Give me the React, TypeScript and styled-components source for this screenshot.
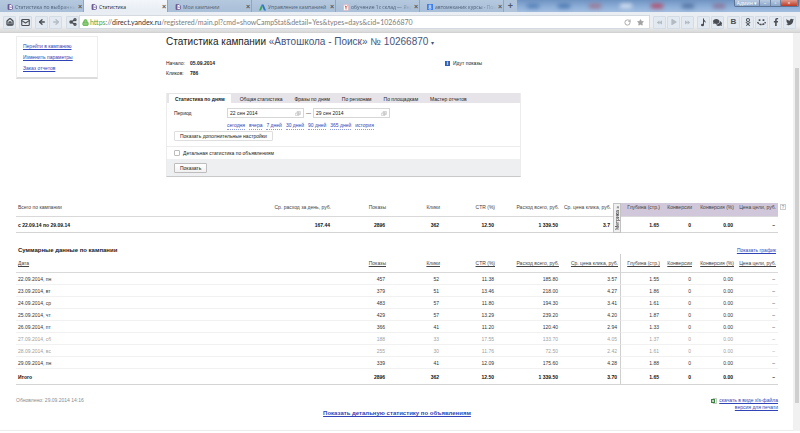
import React from "react";
import styled, { createGlobalStyle, css } from "styled-components";
import { ArrowLeft, ArrowRight, House, Mail, RotateCw, Share2, Star, Lock } from "lucide-react";
import { FaBackward, FaForward, FaPlay, FaComments, FaOdnoklassniki, FaFacebookF, FaTwitter } from "react-icons/fa";

const Global = createGlobalStyle`
  * { box-sizing: border-box; }
  html, body, #root { margin: 0; min-height: 100%; }
  body {
    background: #fff;
    color: #222;
    font: 5px/8px "Liberation Sans", Arial, sans-serif;
  }
  button, input { font: inherit; color: inherit; margin: 0; }
  svg { display: block; flex: none; }
`;

/* ---------- browser window ---------- */

const TabStrip = styled.header`
  display: flex;
  height: 12px;
  background: linear-gradient(#6f93c2, #8fb0d8 60%, #a3bde0);
  font-family: "Open Sans", sans-serif;
`;

const BrowserTab = styled.div<{ $active?: boolean }>`
  display: flex;
  align-items: center;
  flex: 0 1 84px;
  min-width: 0;
  gap: 2px;
  padding: 2px 1px 0 7px;
  border-right: 1px solid #8fa6c2;
  background: ${(p) => (p.$active ? "linear-gradient(#f3f6fa, #e6ecf3)" : "linear-gradient(#b4c8de, #a9bfd8)")};
  color: ${(p) => (p.$active ? "#222" : "#4c5f77")};
`;

const TabTitle = styled.span<{ $fade?: boolean }>`
  flex: 1;
  min-width: 0;
  overflow: hidden;
  white-space: nowrap;
  ${(p) => p.$fade && css`mask-image: linear-gradient(90deg, #000 75%, transparent);`}
`;

const TabButton = styled.button`
  display: flex;
  align-items: center;
  justify-content: center;
  padding: 0;
  border: 0;
  background: none;
  color: #4c5968;
  font: bold 7px/8px "Liberation Sans", sans-serif;
`;

const NewTab = styled(TabButton)`
  width: 13px;
  background: #b0c4dc;
  font-size: 9px;
`;

const Glass = styled.div`
  flex: 1;
  display: flex;
  align-items: center;
  justify-content: space-around;
  overflow: hidden;
  filter: blur(2px);
`;

const GlassMark = styled.i<{ $tone: string }>`
  width: 12px;
  height: 4px;
  border-radius: 1px;
  background: ${(p) => p.$tone};
`;

const WindowButtons = styled.div`
  display: flex;
  height: 7px;
  margin-right: 1px;
  border: 1px solid #5c7394;
  border-top: 0;
  border-radius: 0 0 2px 2px;
  overflow: hidden;
`;

const WindowButton = styled.button<{ $width: number; $close?: boolean }>`
  display: flex;
  align-items: center;
  justify-content: center;
  width: ${(p) => p.$width}px;
  padding: 0;
  border: 0;
  border-right: 1px solid #6d84a4;
  background: ${(p) => (p.$close ? "linear-gradient(#dd9a8e, #bd3a25)" : "linear-gradient(#b9cbe2, #8ba6c8)")};
  color: #fff;
  line-height: 6px;
`;

const Toolbar = styled.nav`
  display: flex;
  align-items: center;
  height: 21px;
  padding: 0 4px 0 3px;
  gap: 3px;
  background: linear-gradient(#e9eef4, #eceef0 70%, #d9d9d9);
  border-bottom: 1px solid #d2d2d2;
`;

const ButtonGroup = styled.div`
  display: flex;
  gap: 1px;
`;

const ToolButton = styled.button<{ $faded?: boolean }>`
  display: flex;
  align-items: center;
  justify-content: center;
  flex: none;
  width: 13px;
  height: 13px;
  padding: 0;
  border: 1px solid #d3dbe4;
  border-radius: 1px;
  background: #e3e9f0;
  color: ${(p) => (p.$faded ? "#b3bac2" : "#4a4e54")};
  font: bold 8px/8px "Liberation Sans", sans-serif;
`;

const ShareAndAddress = styled.div`
  display: flex;
  align-items: center;
  flex: 1;
  min-width: 0;
  margin-left: 1px;
`;

const AddressBar = styled.form`
  display: flex;
  align-items: center;
  flex: 1;
  min-width: 0;
  height: 14px;
  padding: 0 5px 0 2px;
  background: #fff;
  border: 1px solid #d5dae0;
  font: 7px/10px Lato, sans-serif;
  color: #7c7c7c;
`;

const Scheme = styled.span`color: #4fa543; margin-left: 1px;`;
const Host = styled.label`color: #333;`;

const AddressInput = styled.input`
  flex: 1;
  min-width: 0;
  padding: 0;
  border: 0;
  outline: 0;
  background: none;
`;

const AddressButton = styled(TabButton)`
  margin-left: 6px;
  color: #a2a2a2;
`;

const Viewport = styled.div`
  display: flex;
`;

const Scrollbar = styled.div`
  flex: none;
  width: 7px;
  padding: 35px 1px 28px 2px;
  background: #f1f1f1;
`;

const ScrollThumb = styled.div`
  height: 100%;
  background: #cfcfcf;
`;

/* ---------- page ---------- */

const Page = styled.main`
  flex: 1;
  min-width: 0;
`;

const Link = styled.a<{ $dashed?: boolean }>`
  color: #3044b8;
  text-decoration: ${(p) => (p.$dashed ? "none" : "underline")};
  ${(p) => p.$dashed && css`border-bottom: 1px dotted #8d99d8;`}
`;

const Top = styled.section`
  display: grid;
  grid-template-columns: 82px minmax(0, 1fr);
  column-gap: 68px;
  align-items: start;
  padding: 3px 15px 0 16px;
`;

const SideMenu = styled.nav`
  display: flex;
  flex-direction: column;
  align-items: flex-start;
  gap: 3px;
  padding: 5px 6px;
  border: 1px solid #ededed;
  border-bottom: 2px solid #dcdcdc;
`;

const Title = styled.h1`
  margin: 0;
  font-size: 10px;
  line-height: 12px;
  font-weight: normal;
  color: #222;
  white-space: nowrap;
  span { color: #44547c; }
  small { font-size: 6px; }
`;

const Facts = styled.div`
  display: grid;
  grid-template-columns: 279px 1fr;
  align-items: start;
  margin-top: 10px;
`;

const FactList = styled.dl`
  display: grid;
  grid-template-columns: 24px 1fr;
  row-gap: 2px;
  margin: 0;
  dt, dd { margin: 0; }
  dd { font-weight: bold; }
`;

const Status = styled.p`
  display: flex;
  align-items: center;
  gap: 3px;
  margin: 0;
`;

const InfoMark = styled.span`
  width: 5px;
  height: 5px;
  background: #2f62ad;
  color: #fff;
  font: bold 5px/5px "Liberation Sans", sans-serif;
  text-align: center;
`;

const Panel = styled.form`
  width: 58%;
  margin-top: 16px;
  border: 1px solid #ececec;
  border-top: 0;
  border-bottom: 1px solid #c9c9cb;
`;

const PanelTabs = styled.div`
  display: flex;
  align-items: flex-end;
  height: 10px;
  padding-left: 2px;
  background: #e7e4e9;
`;

const PanelTab = styled.button<{ $active?: boolean }>`
  height: 9px;
  padding: 0 6px;
  border: 0;
  border-radius: 1px 1px 0 0;
  background: ${(p) => (p.$active ? "#fff" : "none")};
  font-weight: ${(p) => (p.$active ? "bold" : "normal")};
  white-space: nowrap;
  &:first-child { margin-right: 3px; }
`;

const PeriodRow = styled.div`
  display: flex;
  align-items: center;
  padding: 5px 7px 0;
`;

const PeriodLabel = styled.label`width: 53px;`;

const DateField = styled.span`
  display: flex;
  align-items: center;
  width: 77px;
  height: 10px;
  padding: 0 2px;
  border: 1px solid #d6d6d6;
`;

const DateInput = styled.input`
  flex: 1;
  min-width: 0;
  padding: 0;
  border: 0;
  background: none;
`;

const Dash = styled.span`
  width: 9px;
  text-align: center;
`;

const QuickDates = styled.div`
  display: flex;
  gap: 4px;
  padding: 4px 0 0 60px;
  line-height: 7px;
`;

const PlainButton = styled.button<{ $raised?: boolean }>`
  display: block;
  height: 10px;
  padding: 0 5px;
  border: 1px solid ${(p) => (p.$raised ? "#bdbdbd" : "#dedede")};
  border-radius: 1px;
  background: ${(p) => (p.$raised ? "linear-gradient(#fff, #f1f1f1)" : "#fff")};
  line-height: 7px;
  white-space: nowrap;
`;

const ExtraRow = styled.div`padding: 1px 7px 5px;`;

const CheckRow = styled.label`
  display: flex;
  align-items: center;
  gap: 3px;
  height: 13px;
  padding-left: 7px;
  border-top: 1px solid #ececec;
`;

const CheckBox = styled.input`
  appearance: none;
  width: 6px;
  height: 6px;
  border: 1px solid #bcbcbc;
  border-radius: 1px;
  background: #fff;
`;

const PanelFooter = styled.div`
  padding: 4px 7px 3px;
  background: #eeeff1;
`;

/* ---------- tables ---------- */

const Report = styled.section<{ $gap: number }>`
  display: grid;
  grid-template-columns: minmax(0, 1fr) 15px;
  margin-top: ${(p) => p.$gap}px;
  padding-left: 16px;
`;

const ReportHead = styled.div`
  grid-column: 1;
  display: flex;
  justify-content: space-between;
  padding: 0 2px;
  h2 { margin: 0; font-size: 6px; line-height: 8px; }
`;

const Grid = styled.table`
  grid-column: 1;
  width: 100%;
  table-layout: fixed;
  border-collapse: separate;
  border-spacing: 0;
`;

const Col = styled.col<{ $w?: number }>`
  width: ${(p) => (p.$w ? p.$w + "px" : "auto")};
`;

const HeadCell = styled.th<{ $height: number; $tint?: boolean; $link?: boolean; $rule?: boolean }>`
  height: ${(p) => p.$height}px;
  padding: 0 2px ${(p) => (p.$link ? 0 : 5)}px;
  border-bottom: 1px solid #d9d9d9;
  ${(p) => p.$rule && css`border-right: 1px solid #cfcfcf;`}
  background: ${(p) => (p.$tint ? "#d0c8da" : "none")};
  color: #444;
  line-height: 6px;
  font-weight: normal;
  text-align: right;
  white-space: nowrap;
  text-decoration: ${(p) => (p.$link ? "underline" : "none")};
  &:first-child { text-align: left; }
`;

const Cell = styled.td<{ $height: number; $bold?: boolean; $faded?: boolean; $rule?: boolean; $last?: boolean }>`
  height: ${(p) => p.$height}px;
  padding: 0 3px 0 2px;
  border-bottom: 1px solid ${(p) => (p.$last ? "#d4d4d4" : "#f1f1f1")};
  ${(p) => p.$rule && css`border-right: 1px solid #cfcfcf;`}
  color: ${(p) => (p.$faded ? "#a0a0a0" : p.$bold ? "#111" : "#333")};
  font-weight: ${(p) => (p.$bold ? "bold" : "normal")};
  text-align: right;
  white-space: nowrap;
  &:first-child { text-align: left; }
`;

const MetrikaCell = styled.td`
  padding: 0;
  height: 30px;
`;

const MetrikaButton = styled.button`
  display: block;
  width: 8px;
  height: 30px;
  padding: 0;
  border: 1px solid #c2c2c2;
  background: #f0f0f0;
  writing-mode: vertical-rl;
  transform: rotate(180deg);
  line-height: 6px;
  text-align: center;
  white-space: nowrap;
`;

const Hint = styled.button`
  grid-column: 2;
  width: 6px;
  height: 6px;
  margin: 1px 2px;
  padding: 0;
  border: 1px solid #ccc;
  background: #fff;
  color: #888;
  line-height: 4px;
`;

const Foot = styled.footer`
  display: grid;
  grid-template-columns: 1fr auto 1fr;
  padding: 11px 15px 13px 16px;
  border-bottom: 1px solid #ececec;
`;

const Updated = styled.p`
  margin: 0;
  color: #8c8c8c;
`;

const DetailLink = styled(Link)`
  margin-top: 13px;
  font-size: 6px;
  font-weight: bold;
`;

const Exports = styled.div`
  display: flex;
  flex-direction: column;
  align-items: flex-end;
  line-height: 7px;
  padding-top: 1px;
`;

const ExportLine = styled.span`
  display: flex;
  align-items: center;
  gap: 2px;
`;

const PageIcon = () => (
  <svg width="6" height="6" viewBox="0 0 12 12">
    <path d="M2 1h6l3 3v6l-3 1H2z" fill="#fff" stroke="#6b5b95" strokeWidth="1.6" />
    <path d="M2 1h3v10H2z" fill="#6b5b95" />
    <path d="M7 5h2v3H7z" fill="#6b5b95" />
  </svg>
);
const DirectIcon = () => (
  <svg width="7" height="7" viewBox="0 0 14 14">
    <path d="M5 1h4l5 12h-4z" fill="#2b78c5" />
    <path d="M5 1l2 5-3 7H0z" fill="#37a85b" />
  </svg>
);
const SearchPageIcon = () => (
  <svg width="6" height="7" viewBox="0 0 12 14">
    <path d="M1 1h10v12H1z" fill="#fff" stroke="#d6a5ac" />
    <path d="M4 3l2 4v4M9 3L6 7" fill="none" stroke="#d33" strokeWidth="1.6" />
  </svg>
);
const GoogleIcon = () => (
  <svg width="6" height="6" viewBox="0 0 12 12">
    <path d="M0 0h12v12H0z" fill="#3f7fe8" />
    <circle cx="6" cy="4" r="2" fill="none" stroke="#fff" strokeWidth="1.3" />
    <circle cx="6" cy="8.5" r="2.2" fill="none" stroke="#fff" strokeWidth="1.3" />
  </svg>
);
const NoteIcon = () => (
  <svg width="7" height="9" viewBox="0 0 14 18">
    <path d="M7 1v13" stroke="#4a4e54" strokeWidth="2" />
    <path d="M7 1c1 4 5 4 4 9-1-3-3-3-4-3z" fill="#4a4e54" />
    <ellipse cx="5" cy="14" rx="3" ry="2.4" fill="#4a4e54" />
  </svg>
);
const CalendarIcon = () => (
  <svg width="6" height="5" viewBox="0 0 12 10">
    <path d="M4 1h7v6H4zM1 4h7v5H1zM6 1v8M8 1v6M4 4h7" fill="none" stroke="#bbb" />
  </svg>
);
const SmileIcon = () => (
  <svg width="9" height="8" viewBox="0 0 16 14">
    <path d="M3 2h3v3H3zM10 2h3v3h-3z" fill="#4a4e54" />
    <path d="M1 7c2 6 12 6 14 0" fill="none" stroke="#4a4e54" strokeWidth="2.4" strokeDasharray="4 1" />
  </svg>
);
const ExcelIcon = () => (
  <svg width="6" height="6" viewBox="0 0 12 12">
    <path d="M4 1h7v10H4z" fill="#fff" stroke="#7f9f7f" />
    <path d="M0 2h8v8H0z" fill="#3d8642" />
    <path d="M2 4l4 4M6 4L2 8" stroke="#fff" strokeWidth="1.3" />
  </svg>
);

const browserTabs = [
  { title: "Статистика по выбранны", icon: <PageIcon />, fade: true },
  { title: "Статистика", icon: <PageIcon />, active: true },
  { title: "Мои кампании", icon: <PageIcon /> },
  { title: "Управление кампанией", icon: <DirectIcon /> },
  { title: "обучение 1с склад — Янд", icon: <SearchPageIcon />, fade: true },
  { title: "автомеханик курсы - Пои", icon: <GoogleIcon />, fade: true },
];

const panelTabs = ["Статистика по дням", "Общая статистика", "Фразы по дням", "По регионам", "По площадкам", "Мастер отчетов"];
const quickDates = ["сегодня", "вчера", "7 дней", "30 дней", "90 дней", "365 дней", "история"];

const dayColumns = ["Дата", "Показы", "Клики", "CTR (%)", "Расход всего, руб.", "Ср. цена клика, руб.", "Глубина (стр.)", "Конверсии", "Конверсия (%)", "Цена цели, руб."];
const dayWidths = [0, 55, 54, 55, 64, 60, 41, 32, 42, 42];
const totalWidths = [0, 73, 55, 54, 55, 64, 52, 8, 41, 32, 42, 42];

const days = [
  ["22.09.2014, пн", "457", "52", "11.38", "185.80", "3.57", "1.55", "0", "0.00", "–"],
  ["23.09.2014, вт", "379", "51", "13.46", "218.00", "4.27", "1.86", "0", "0.00", "–"],
  ["24.09.2014, ср", "483", "57", "11.80", "194.30", "3.41", "1.61", "0", "0.00", "–"],
  ["25.09.2014, чт", "429", "57", "13.29", "239.20", "4.20", "1.87", "0", "0.00", "–"],
  ["26.09.2014, пт", "366", "41", "11.20", "120.40", "2.94", "1.33", "0", "0.00", "–"],
  ["27.09.2014, сб", "188", "33", "17.55", "133.70", "4.05", "1.37", "0", "0.00", "–"],
  ["28.09.2014, вс", "255", "30", "11.76", "72.50", "2.42", "1.61", "0", "0.00", "–"],
  ["29.09.2014, пн", "339", "41", "12.09", "175.60", "4.28", "1.88", "0", "0.00", "–"],
];
const total = ["Итого", "2896", "362", "12.50", "1 339.50", "3.70", "1.65", "0", "0.00", "–"];
const weekend = (day: string) => /сб|вс/.test(day);

function Browser() {
  return (
    <>
      <TabStrip>
        {browserTabs.map((t) => (
          <BrowserTab key={t.title} $active={t.active}>
            {t.icon}
            <TabTitle $fade={t.fade}>{t.title}</TabTitle>
            <TabButton aria-label="Закрыть вкладку">×</TabButton>
          </BrowserTab>
        ))}
        <NewTab aria-label="Новая вкладка">+</NewTab>
        <Glass>
          {["#4f7cb4", "#4674ae", "#a0708c", "#dbe6f4", "#b8405c", "#4b6c9c", "#8a6f94"].map((tone, i) => (
            <GlassMark key={i} $tone={tone} />
          ))}
        </Glass>
        <WindowButtons>
          <WindowButton $width={25}>Админ ▾</WindowButton>
          <WindowButton $width={11} aria-label="Свернуть">–</WindowButton>
          <WindowButton $width={10} aria-label="Развернуть">▫</WindowButton>
          <WindowButton $width={17} $close aria-label="Закрыть">×</WindowButton>
        </WindowButtons>
      </TabStrip>
      <Toolbar>
        <ToolButton aria-label="Домой"><House size={8} strokeWidth={4} /></ToolButton>
        <ToolButton aria-label="Почта"><Mail size={9} strokeWidth={3} /></ToolButton>
        <ButtonGroup>
          <ToolButton aria-label="Назад"><ArrowLeft size={8} strokeWidth={4} /></ToolButton>
          <ToolButton aria-label="Вперёд" $faded><ArrowRight size={8} strokeWidth={4} /></ToolButton>
        </ButtonGroup>
        <ShareAndAddress>
          <ToolButton aria-label="Поделиться"><Share2 size={8} strokeWidth={4} /></ToolButton>
          <AddressBar>
            <Lock size={7} color="#5fb14c" fill="#8ccc78" strokeWidth={3} />
            <Scheme>https</Scheme>
            <span>://</span>
            <Host htmlFor="address">direct.yandex.ru</Host>
            <AddressInput id="address" defaultValue="/registered/main.pl?cmd=showCampStat&detail=Yes&types=days&cid=10266870" />
            <AddressButton type="button" aria-label="Обновить"><RotateCw size={7} strokeWidth={3} /></AddressButton>
            <AddressButton type="button" aria-label="В закладки"><Star size={7} fill="#a2a2a2" /></AddressButton>
          </AddressBar>
        </ShareAndAddress>
        <ButtonGroup>
          <ToolButton aria-label="Предыдущий трек" $faded><FaBackward size={5} /></ToolButton>
          <ToolButton aria-label="Играть" $faded><FaPlay size={6} /></ToolButton>
          <ToolButton aria-label="Следующий трек" $faded><FaForward size={5} /></ToolButton>
        </ButtonGroup>
        <ButtonGroup>
          <ToolButton aria-label="Музыка"><NoteIcon /></ToolButton>
          <ToolButton aria-label="Сообщения"><FaComments size={9} /></ToolButton>
        </ButtonGroup>
        <ButtonGroup>
          <ToolButton aria-label="ВКонтакте">В</ToolButton>
          <ToolButton aria-label="Одноклассники"><FaOdnoklassniki size={8} /></ToolButton>
          <ToolButton aria-label="Мой мир"><SmileIcon /></ToolButton>
          <ToolButton aria-label="Facebook"><FaFacebookF size={8} /></ToolButton>
          <ToolButton aria-label="Twitter"><FaTwitter size={8} /></ToolButton>
        </ButtonGroup>
      </Toolbar>
    </>
  );
}

function Filters() {
  return (
    <Panel>
      <PanelTabs>
        {panelTabs.map((t, i) => (
          <PanelTab key={t} type="button" $active={i === 0}>{t}</PanelTab>
        ))}
      </PanelTabs>
      <PeriodRow>
        <PeriodLabel htmlFor="from">Период</PeriodLabel>
        <DateField><DateInput id="from" defaultValue="22 сен 2014" /><CalendarIcon /></DateField>
        <Dash>—</Dash>
        <DateField><DateInput aria-label="Конец периода" defaultValue="29 сен 2014" /><CalendarIcon /></DateField>
      </PeriodRow>
      <QuickDates>
        {quickDates.map((d) => <Link key={d} href="#" $dashed>{d}</Link>)}
      </QuickDates>
      <ExtraRow>
        <PlainButton type="button">Показать дополнительные настройки</PlainButton>
      </ExtraRow>
      <CheckRow><CheckBox type="checkbox" />Детальная статистика по объявлениям</CheckRow>
      <PanelFooter>
        <PlainButton type="button" $raised>Показать</PlainButton>
      </PanelFooter>
    </Panel>
  );
}

function CampaignTotals() {
  const left = ["Всего по кампании", "Ср. расход за день, руб.", "Показы", "Клики", "CTR (%)", "Расход всего, руб.", "Ср. цена клика, руб."];
  return (
    <Report $gap={26}>
      <Grid>
        <colgroup>{totalWidths.map((w, i) => <Col key={i} $w={w} />)}</colgroup>
        <tbody>
          <tr>
            {left.map((h) => <HeadCell key={h} $height={14}>{h}</HeadCell>)}
            <MetrikaCell rowSpan={2}><MetrikaButton>Метрика »</MetrikaButton></MetrikaCell>
            {dayColumns.slice(6).map((h) => <HeadCell key={h} $height={14} $tint>{h}</HeadCell>)}
          </tr>
          <tr>
            {["с 22.09.14 по 29.09.14", "167.44", "2896", "362", "12.50", "1 339.50", "3.7", "1.65", "0", "0.00", "–"].map((v, i) => (
              <Cell key={i} $height={16} $bold $last>{v}</Cell>
            ))}
          </tr>
        </tbody>
      </Grid>
      <Hint aria-label="Справка">?</Hint>
    </Report>
  );
}

function DailyReport() {
  return (
    <Report $gap={13}>
      <ReportHead>
        <h2>Суммарные данные по кампании</h2>
        <Link href="#">Показать график</Link>
      </ReportHead>
      <Grid>
        <colgroup>{dayWidths.map((w, i) => <Col key={i} $w={w} />)}</colgroup>
        <thead>
          <tr>{dayColumns.map((h, i) => <HeadCell key={h} $height={19} $link $rule={i === 5}>{h}</HeadCell>)}</tr>
        </thead>
        <tbody>
          {days.map((row) => (
            <tr key={row[0]}>
              {row.map((v, i) => <Cell key={i} $height={12} $rule={i === 5} $faded={weekend(row[0])}>{v}</Cell>)}
            </tr>
          ))}
          <tr>{total.map((v, i) => <Cell key={i} $height={16} $bold $last $rule={i === 5}>{v}</Cell>)}</tr>
        </tbody>
      </Grid>
    </Report>
  );
}

export default function App() {
  return (
    <>
      <Global />
      <Browser />
      <Viewport>
        <Page>
          <Top>
            <SideMenu>
              <Link href="#">Перейти в кампанию</Link>
              <Link href="#">Изменить параметры</Link>
              <Link href="#">Заказ отчетов</Link>
            </SideMenu>
            <div>
              <Title>Статистика кампании <span>«Автошкола - Поиск» № 10266870 <small>▾</small></span></Title>
              <Facts>
                <FactList>
                  <dt>Начало:</dt><dd>05.09.2014</dd>
                  <dt>Кликов:</dt><dd>786</dd>
                </FactList>
                <Status><InfoMark>i</InfoMark>Идут показы</Status>
              </Facts>
              <Filters />
            </div>
          </Top>
          <CampaignTotals />
          <DailyReport />
          <Foot>
            <Updated>Обновлено: 29.09.2014 14:16</Updated>
            <DetailLink href="#">Показать детальную статистику по объявлениям</DetailLink>
            <Exports>
              <ExportLine><ExcelIcon /><Link href="#">скачать в виде xls-файла</Link></ExportLine>
              <Link href="#">версия для печати</Link>
            </Exports>
          </Foot>
        </Page>
        <Scrollbar><ScrollThumb /></Scrollbar>
      </Viewport>
    </>
  );
}
